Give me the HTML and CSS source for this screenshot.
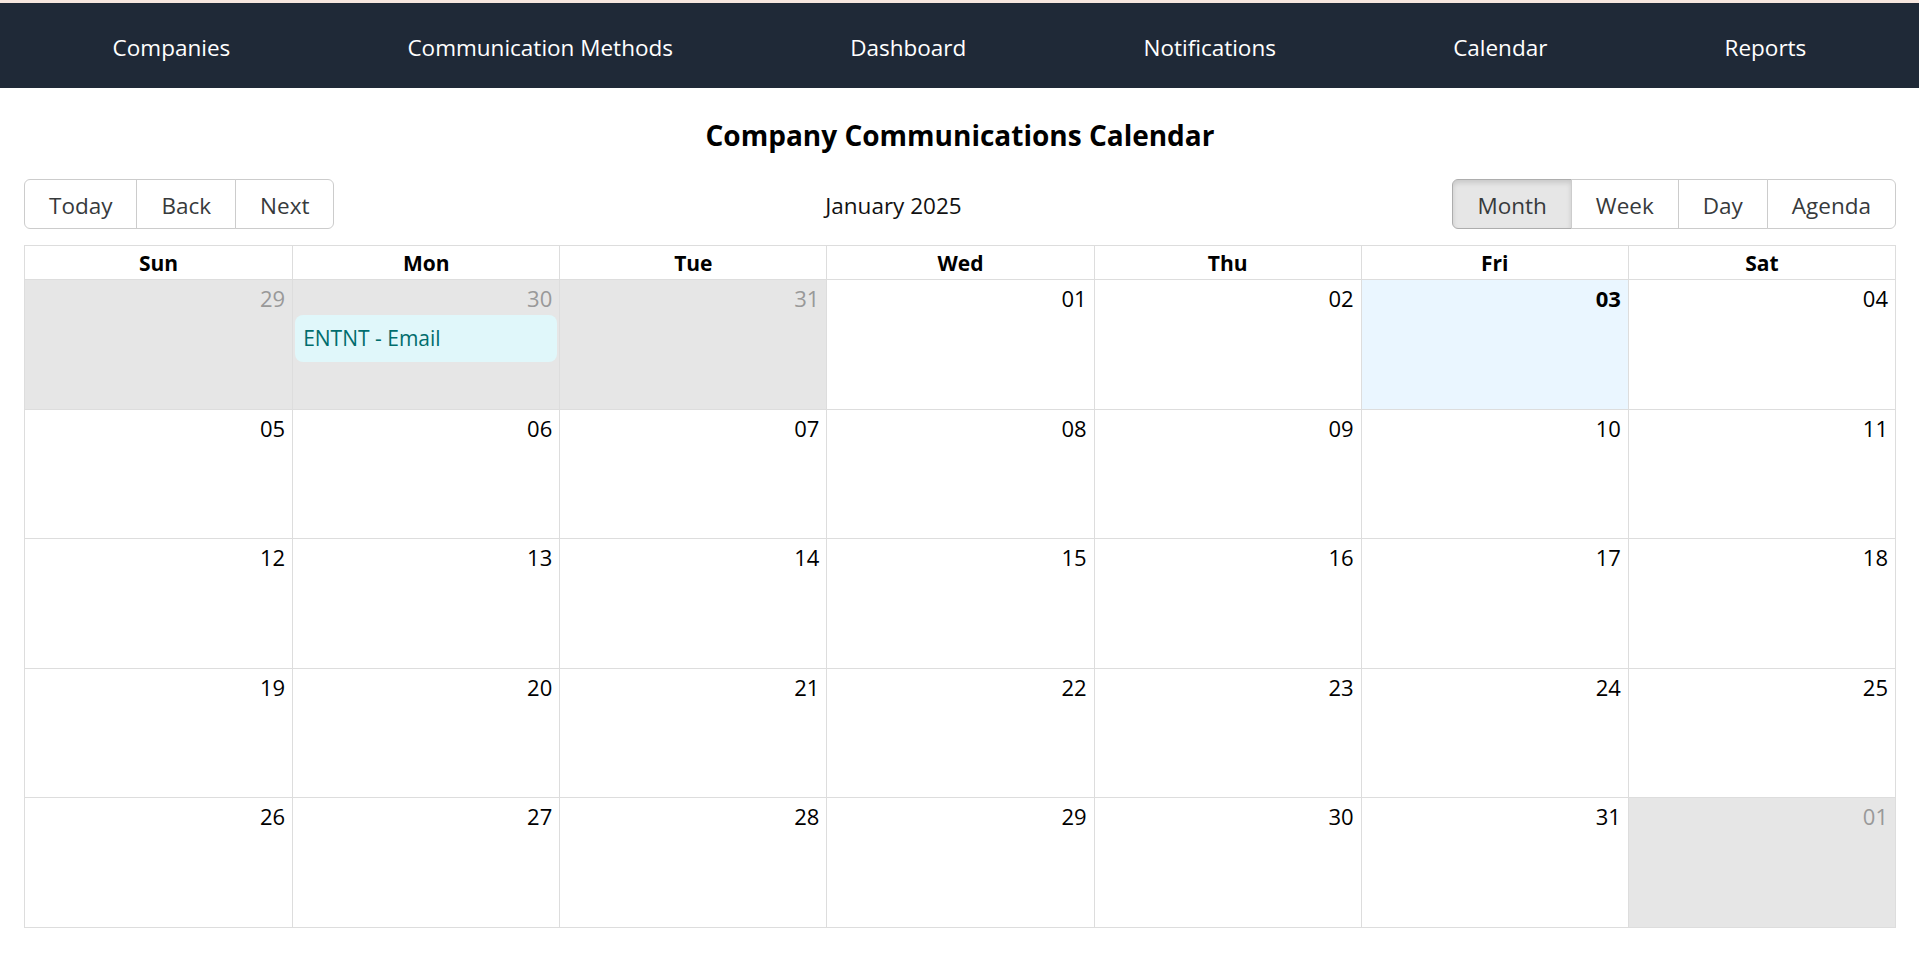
FILE: index.html
```html
<!DOCTYPE html>
<html lang="en">
<head>
<meta charset="utf-8">
<title>Company Communications Calendar</title>
<link rel="stylesheet" href="styles.css">
</head>
<body>
<nav class="topnav">
  <a class="nav-link" href="#">Companies</a>
  <a class="nav-link" href="#">Communication Methods</a>
  <a class="nav-link" href="#">Dashboard</a>
  <a class="nav-link" href="#">Notifications</a>
  <a class="nav-link" href="#">Calendar</a>
  <a class="nav-link" href="#">Reports</a>
</nav>
<main class="page">
  <h1 class="title">Company Communications Calendar</h1>
  <div class="toolbar">
    <div class="btn-group">
      <button class="btn" type="button">Today</button>
      <button class="btn" type="button">Back</button>
      <button class="btn" type="button">Next</button>
    </div>
    <div class="toolbar-label">January 2025</div>
    <div class="btn-group">
      <button class="btn active" type="button">Month</button>
      <button class="btn" type="button">Week</button>
      <button class="btn" type="button">Day</button>
      <button class="btn" type="button">Agenda</button>
    </div>
  </div>
  <div class="calendar">
    <div class="head-row">
      <div class="head-cell">Sun</div>
      <div class="head-cell">Mon</div>
      <div class="head-cell">Tue</div>
      <div class="head-cell">Wed</div>
      <div class="head-cell">Thu</div>
      <div class="head-cell">Fri</div>
      <div class="head-cell">Sat</div>
    </div>
    <div class="month">
      <div class="week">
        <div class="day off"><span class="date">29</span></div>
        <div class="day off"><span class="date">30</span><div class="event">ENTNT - Email</div></div>
        <div class="day off"><span class="date">31</span></div>
        <div class="day"><span class="date">01</span></div>
        <div class="day"><span class="date">02</span></div>
        <div class="day today"><span class="date">03</span></div>
        <div class="day"><span class="date">04</span></div>
      </div>
      <div class="week">
        <div class="day"><span class="date">05</span></div>
        <div class="day"><span class="date">06</span></div>
        <div class="day"><span class="date">07</span></div>
        <div class="day"><span class="date">08</span></div>
        <div class="day"><span class="date">09</span></div>
        <div class="day"><span class="date">10</span></div>
        <div class="day"><span class="date">11</span></div>
      </div>
      <div class="week">
        <div class="day"><span class="date">12</span></div>
        <div class="day"><span class="date">13</span></div>
        <div class="day"><span class="date">14</span></div>
        <div class="day"><span class="date">15</span></div>
        <div class="day"><span class="date">16</span></div>
        <div class="day"><span class="date">17</span></div>
        <div class="day"><span class="date">18</span></div>
      </div>
      <div class="week">
        <div class="day"><span class="date">19</span></div>
        <div class="day"><span class="date">20</span></div>
        <div class="day"><span class="date">21</span></div>
        <div class="day"><span class="date">22</span></div>
        <div class="day"><span class="date">23</span></div>
        <div class="day"><span class="date">24</span></div>
        <div class="day"><span class="date">25</span></div>
      </div>
      <div class="week">
        <div class="day"><span class="date">26</span></div>
        <div class="day"><span class="date">27</span></div>
        <div class="day"><span class="date">28</span></div>
        <div class="day"><span class="date">29</span></div>
        <div class="day"><span class="date">30</span></div>
        <div class="day"><span class="date">31</span></div>
        <div class="day off"><span class="date">01</span></div>
      </div>
    </div>
  </div>
</main>
</body>
</html>
```
FILE: styles.css
```css
* { box-sizing: border-box; }

html, body {
  margin: 0;
  padding: 0;
}

body {
  font-family: "Segoe UI", "Open Sans", "Noto Sans", sans-serif;
  color: #000;
  background: #fff;
  border-top: 3px solid #f6e6de;
}

.topnav {
  height: 85px;
  background: #1f2937;
  display: flex;
  align-items: center;
  justify-content: space-around;
  padding: 0 24px;
}

.nav-link {
  color: #fff;
  text-decoration: none;
  font-size: 22.5px;
  line-height: 30px;
  padding-top: 5px;
}

.page {
  padding: 0 23px 0 24px;
}

.title {
  margin: 27px 0 24px;
  text-align: center;
  font-size: 28px;
  line-height: 40px;
  font-weight: 700;
}

.toolbar {
  display: flex;
  align-items: center;
  margin-bottom: 16px;
}

.btn-group {
  display: flex;
}

.btn {
  font-family: inherit;
  font-size: 22.5px;
  line-height: 45px;
  height: 50px;
  padding: 3px 24px 0;
  color: #373a3c;
  background: #fff;
  border: 1px solid #ccc;
  border-radius: 0;
  margin: 0;
}

.btn + .btn {
  margin-left: -1px;
}

.btn:first-child {
  border-radius: 6px 0 0 6px;
}

.btn:last-child {
  border-radius: 0 6px 6px 0;
}

.btn.active {
  background: #e6e6e6;
  border-color: #adadad;
  box-shadow: inset 0 3px 5px rgba(0, 0, 0, 0.125);
}

.toolbar-label {
  flex: 1;
  text-align: center;
  font-size: 22.5px;
  color: #111;
  padding-top: 2px;
}

.calendar {
  height: 683px;
  border: 1px solid #ddd;
  display: flex;
  flex-direction: column;
}

.head-row {
  display: grid;
  grid-template-columns: repeat(7, 1fr);
  height: 34px;
  border-bottom: 1px solid #ddd;
}

.head-cell {
  text-align: center;
  font-weight: 700;
  font-size: 21px;
  line-height: 32px;
  padding-top: 1px;
}

.head-cell + .head-cell {
  border-left: 1px solid #ddd;
}

.month {
  flex: 1;
  display: flex;
  flex-direction: column;
}

.week {
  flex: 1;
  display: grid;
  grid-template-columns: repeat(7, 1fr);
}

.week + .week {
  border-top: 1px solid #ddd;
}

.day {
  display: flex;
  flex-direction: column;
  padding: 3px 2px 0;
}

.day + .day {
  border-left: 1px solid #ddd;
}

.date {
  display: block;
  text-align: right;
  padding-right: 5px;
  font-size: 22px;
  line-height: 30px;
}

.day.off {
  background: #e6e6e6;
}

.day.off .date {
  color: #999;
}

.day.today {
  background: #eaf6ff;
}

.day.today .date {
  font-weight: 700;
}

.event {
  margin-top: 2px;
  background: #e0f7fa;
  color: #006d6d;
  border-radius: 8px;
  padding: 8px 8px;
  font-size: 21px;
  line-height: 31px;
}
```
